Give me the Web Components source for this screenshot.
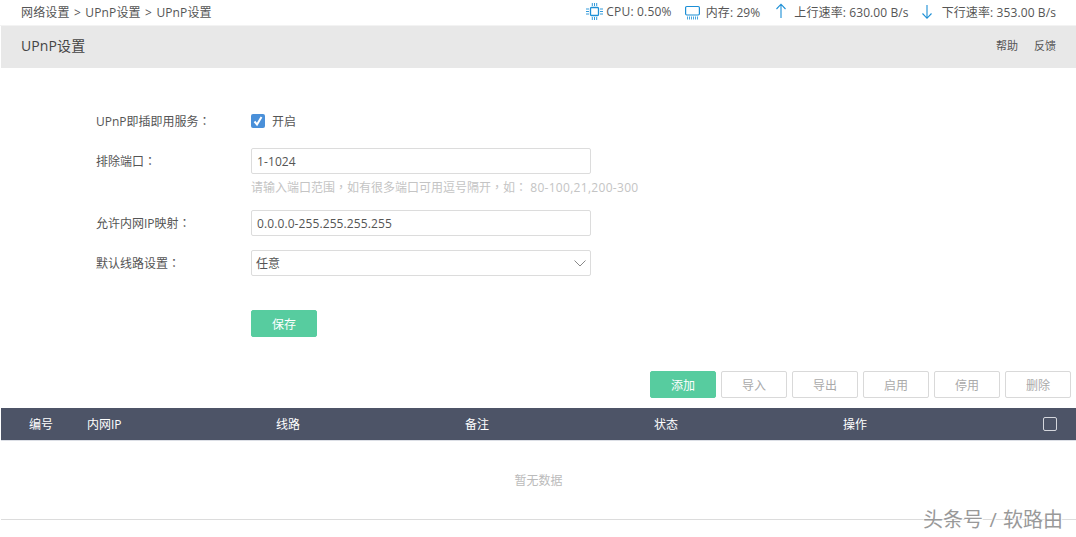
<!DOCTYPE html>
<html lang="zh"><head><meta charset="utf-8">
<style>
html,body{margin:0;padding:0;background:#fff;overflow:hidden}
body{width:1076px;height:537px;font:12px "Open Sans","Noto Sans CJK SC",sans-serif;color:#555;position:relative}
</style></head><body>
<x-page></x-page>
<script>
const FONT='"Open Sans","Noto Sans CJK SC",sans-serif';
function def(name,css,html){
  customElements.define(name,class extends HTMLElement{
    constructor(){super();const r=this.attachShadow({mode:'open'});
      r.innerHTML='<style>'+css+'</style>'+(typeof html==='function'?html(this):html);}
  });
}
const B='#1c8fd6';
const icons={
cpu:`<svg width="17" height="17" viewBox="0 0 17 17" fill="none" stroke="${B}"><rect x="4.500" y="4.500" width="8" height="8" rx="1" stroke-width="1.300"/><path stroke-width=".9" d="M0 6h3M0 8.500h3M0 11h3M14 6h3M14 8.500h3M14 11h3M6.300 0v3M8.500 0v3M10.700 0v3M6.300 14v3M8.500 14v3M10.700 14v3"/></svg>`,
mem:`<svg width="15" height="17" viewBox="0 0 15 17" fill="none" stroke="${B}"><rect x=".6" y="3.500" width="13.800" height="8.500" rx="1.200" stroke-width="1.200"/><path stroke-width=".8" d="M2.500 13.500v3M4.500 13.500v3M6.500 13.500v3M8.500 13.500v3M10.500 13.500v3M12.500 13.500v3"/></svg>`,
up:`<svg width="10" height="17" viewBox="0 0 10 17" fill="none" stroke="${B}" stroke-width="1.100"><path d="M5 15V1.500M.5 6 5 1.200 9.500 6"/></svg>`,
down:`<svg width="10" height="17" viewBox="0 0 10 17" fill="none" stroke="${B}" stroke-width="1.100"><path d="M5 2v13M.5 10.500 5 15.300l4.500-4.800"/></svg>`
};
def('x-stat',`:host{display:flex;align-items:center;gap:var(--g,3px);white-space:nowrap;letter-spacing:var(--ls,.1px)}svg{display:block}`,
  el=>icons[el.getAttribute('icon')]+'<slot></slot>');
def('x-topbar',`:host{display:flex;align-items:center;justify-content:space-between;box-sizing:border-box;height:26px;padding:0 20px 2px 21px;font-size:12px;color:#555;border-bottom:1px solid #f3f3f3}
  .r{display:flex;align-items:center}
  .c{word-spacing:1.100px;letter-spacing:.14px}`,
  `<div class="c"><slot name="crumb"></slot></div><div class="r"><slot></slot></div>`);
def('x-header',`:host{display:flex;align-items:center;justify-content:space-between;box-sizing:border-box;height:42px;margin:0 0 0 1px;padding:0 20px 4px;background:#e8e8e8}
  .t{font-size:14px;color:#444;letter-spacing:.1px}.l{display:flex;gap:16px;font-size:11px;color:#555;margin-top:-1px}`,
  `<div class="t"><slot name="title"></slot></div><div class="l"><slot></slot></div>`);
def('x-row',`:host{display:flex;align-items:center;min-height:26px;padding-left:96px;color:#555}
  .k{width:155px;flex:none;font-size:12px}
  .k b{font:inherit;font-family:"Noto Sans CJK TC",sans-serif}`,
  el=>`<div class="k">${el.getAttribute('label')}<b lang="zh-Hant">：</b></div><slot></slot>`);
def('x-input',`:host{display:flex;align-items:center;box-sizing:border-box;width:340px;height:26px;border:1px solid #dcdcdc;border-radius:2px;padding:0 5px;font-size:12px;color:#555;background:#fff;letter-spacing:.1px}`,`<slot></slot>`);
def('x-select',`:host{display:flex;align-items:center;justify-content:space-between;box-sizing:border-box;width:340px;height:26px;border:1px solid #dcdcdc;border-radius:2px;padding:0 4px;font-size:12px;color:#555;background:#fff}
  svg{display:block}`,`<slot></slot><svg width="12" height="7" viewBox="0 0 12 7" fill="none" stroke="#888" stroke-width="1"><path d="M.5.500 6 6 11.500.500"/></svg>`);
def('x-check',`:host{display:flex;align-items:center;gap:7px;font-size:12px;color:#555}
  .b{width:14px;height:14px;border-radius:2px;background:#4a90d9;display:flex;align-items:center;justify-content:center}`,
  `<span class="b"><svg width="12" height="12" viewBox="0 0 12 12" fill="none" stroke="#fff" stroke-width="2"><path d="M2.500 6.500 5 9.500 9.500 2"/></svg></span><slot></slot>`);
def('x-btn',`:host{display:flex;align-items:center;justify-content:center;box-sizing:border-box;width:66px;height:27px;border:1px solid #d9d9d9;border-radius:2px;font-size:12px;color:#aaa;background:#fff}
  :host([primary]){background:#57cc9f;border-color:#57cc9f;color:#fff}`,`<slot></slot>`);
def('x-table',`:host{display:block;margin-left:1px}
  .h{display:grid;grid-template-columns:86px 189px 189px 189px 189px 200px 1fr;height:32px;align-items:center;background:#4d5467;color:#fff;font-size:12px;border-bottom:1px solid #dcdfe6}
  .h span:first-child{padding-left:28px}
  .cb{width:12px;height:12px;border:1px solid #d5d7dd;border-radius:2px}
  .e{height:78px;display:flex;align-items:center;justify-content:center;color:#bbb;font-size:12px;border-bottom:1px solid #dcdcdc}`,
  `<div class="h"><span>编号</span><span>内网IP</span><span>线路</span><span>备注</span><span>状态</span><span>操作</span><div class="cb"></div></div><div class="e">暂无数据</div>`);
def('x-page',`:host{display:block;font-family:${FONT}}
  form{display:block;padding-top:40px}
  .hint{margin:3px 0 0 251px;height:20px;line-height:20px;font-size:12px;color:#c4c4c4}
  .hint i{font:inherit;font-family:"Noto Sans CJK TC",sans-serif}
  .hint em{font:inherit;letter-spacing:.3px}
  .tools{display:flex;justify-content:flex-end;gap:5px;padding:0 5px 0 0;margin-top:34px;margin-bottom:10px}
  .save{padding-left:251px;margin-top:34px}
  .mark{position:absolute;left:923px;top:504px;font-size:20px;word-spacing:1.200px;color:#999;text-shadow:1px 1px 0 #fff,-.5px -.5px 0 #fff;white-space:nowrap}`,
  `<x-topbar>
     <span slot="crumb">网络设置 &gt; UPnP设置 &gt; UPnP设置</span>
     <x-stat icon="cpu" style="--ls:.2px;margin-right:13px">CPU: 0.50%</x-stat>
     <x-stat icon="mem" style="--g:6px;margin-right:16px">内存: 29%</x-stat>
     <x-stat icon="up" style="--g:8px;margin-right:13px">上行速率: 630.00 B/s</x-stat>
     <x-stat icon="down" style="--g:10px">下行速率: 353.00 B/s</x-stat>
   </x-topbar>
   <x-header><span slot="title">UPnP设置</span><span>帮助</span><span>反馈</span></x-header>
   <form>
     <x-row label="UPnP即插即用服务"><x-check>开启</x-check></x-row>
     <x-row label="排除端口" style="margin-top:14px"><x-input>1-1024</x-input></x-row>
     <div class="hint">请输入端口范围<i lang="zh-Hant">，</i>如有很多端口可用逗号隔开<i lang="zh-Hant">，</i>如<i lang="zh-Hant">：</i> <em>80-100,21,200-300</em></div>
     <x-row label="允许内网IP映射" style="margin-top:13px"><x-input>0.0.0.0-255.255.255.255</x-input></x-row>
     <x-row label="默认线路设置" style="margin-top:14px"><x-select>任意</x-select></x-row>
     <div class="save"><x-btn primary>保存</x-btn></div>
   </form>
   <div class="tools"><x-btn primary>添加</x-btn><x-btn>导入</x-btn><x-btn>导出</x-btn><x-btn>启用</x-btn><x-btn>停用</x-btn><x-btn>删除</x-btn></div>
   <x-table></x-table>
   <div class="mark">头条号 / 软路由</div>`);
</script>
</body></html>
